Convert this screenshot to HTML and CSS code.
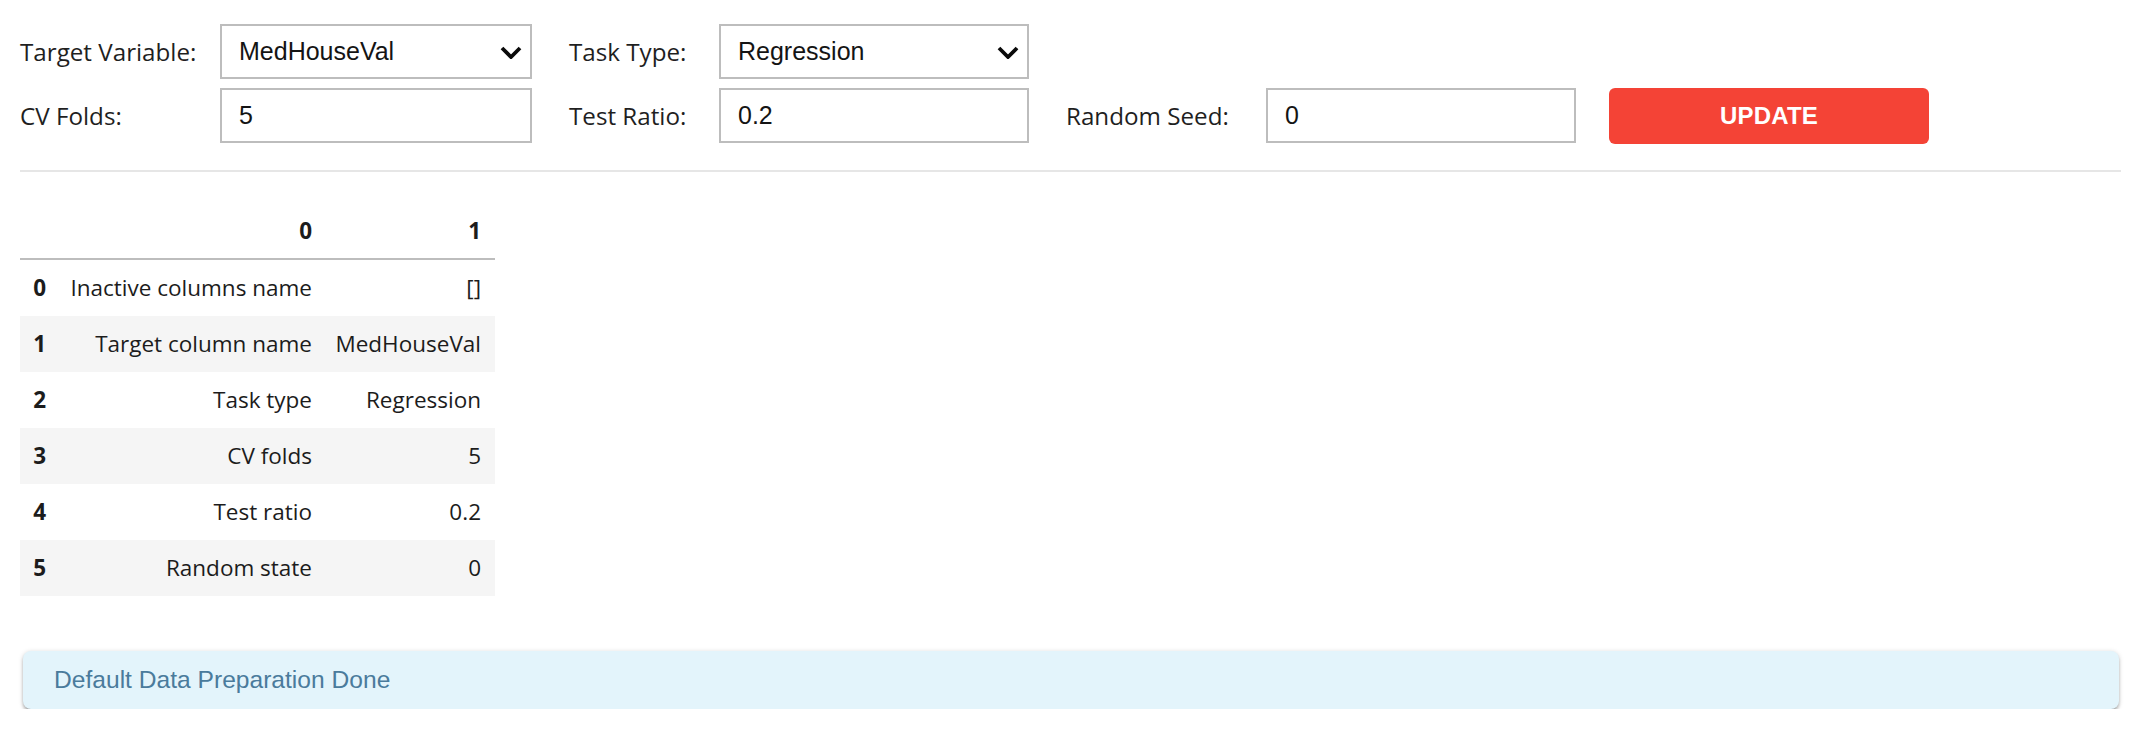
FILE: index.html
```html
<!DOCTYPE html>
<html lang="en">
<head>
<meta charset="utf-8">
<title>Data Preparation</title>
<link rel="stylesheet" href="styles.css">
</head>
<body>
<div class="page">
  <div class="controls">
    <div class="row">
      <div class="field">
        <label class="lbl lbl-wide">Target Variable:</label>
        <div class="select ctl-wide">
          <span class="select-value">MedHouseVal</span>
          <svg class="chev" width="22" height="13" viewBox="0 0 22 13"><polyline points="2,2 11,11 20,2" fill="none" stroke="#0a0a0a" stroke-width="3.8"/></svg>
        </div>
      </div>
      <div class="field">
        <label class="lbl lbl-narrow">Task Type:</label>
        <div class="select ctl">
          <span class="select-value">Regression</span>
          <svg class="chev" width="22" height="13" viewBox="0 0 22 13"><polyline points="2,2 11,11 20,2" fill="none" stroke="#0a0a0a" stroke-width="3.8"/></svg>
        </div>
      </div>
    </div>
    <div class="row">
      <div class="field">
        <label class="lbl lbl-wide">CV Folds:</label>
        <input class="text ctl-wide" type="text" value="5">
      </div>
      <div class="field">
        <label class="lbl lbl-narrow">Test Ratio:</label>
        <input class="text ctl" type="text" value="0.2">
      </div>
      <div class="field">
        <label class="lbl lbl-wide">Random Seed:</label>
        <input class="text ctl" type="text" value="0">
      </div>
      <button class="update" type="button">UPDATE</button>
    </div>
  </div>

  <div class="sep"></div>

  <table class="df">
    <thead>
      <tr><th class="c-idx"></th><th class="c-a">0</th><th class="c-b">1</th></tr>
    </thead>
    <tbody>
      <tr><th>0</th><td>Inactive columns name</td><td>[]</td></tr>
      <tr><th>1</th><td>Target column name</td><td>MedHouseVal</td></tr>
      <tr><th>2</th><td>Task type</td><td>Regression</td></tr>
      <tr><th>3</th><td>CV folds</td><td>5</td></tr>
      <tr><th>4</th><td>Test ratio</td><td>0.2</td></tr>
      <tr><th>5</th><td>Random state</td><td>0</td></tr>
    </tbody>
  </table>

  <div class="alert">Default Data Preparation Done</div>
</div>
</body>
</html>
```
FILE: styles.css
```css
html, body {
  margin: 0;
  padding: 0;
  background: #ffffff;
}

.page {
  padding: 24px 20px 0 20px;
  font-family: "Open Sans", "Noto Sans", sans-serif;
  color: #212121;
}

.controls {
  display: flex;
  flex-direction: column;
  gap: 9px;
}

.row {
  display: flex;
  align-items: center;
  column-gap: 37px;
  height: 55px;
}

.field {
  display: flex;
  align-items: center;
}

.lbl {
  font-size: 24.2px;
  color: #1f1f1f;
  white-space: nowrap;
}

.lbl-wide { width: 200px; }
.lbl-narrow { width: 150px; }

.ctl-wide { width: 312px; }
.ctl { width: 310px; }

.select, .text {
  box-sizing: border-box;
  height: 55px;
  border: 2px solid #bdbdbd;
  background: #fff;
  font-family: "Liberation Sans", Arial, sans-serif;
  font-size: 25px;
  color: #141414;
}

.select {
  display: flex;
  align-items: center;
  justify-content: space-between;
  padding: 0 8px 0 17px;
}

.chev {
  display: block;
  margin-top: 1px;
}

.text {
  padding: 0 17px;
  outline: none;
  margin: 0;
}

.update {
  box-sizing: border-box;
  width: 320px;
  height: 56px;
  margin-left: -4px;
  border: none;
  border-radius: 6px;
  background: #f44336;
  color: #ffffff;
  font-family: "Liberation Sans", Arial, sans-serif;
  font-weight: bold;
  font-size: 24px;
  letter-spacing: 0.2px;
  padding: 0;
}

.sep {
  margin-top: 27px;
  height: 2px;
  background: #e6e6e6;
}

.df {
  margin-top: 31px;
  border-collapse: collapse;
  table-layout: fixed;
  font-size: 22.5px;
  color: #1c1c1c;
}

.df th, .df td {
  text-align: right;
  line-height: 28px;
  padding: 14px 12px 14px 12px;
  white-space: nowrap;
}

.df thead th {
  font-weight: bold;
  padding-bottom: 13px;
  border-bottom: 2px solid #bdbdbd;
}

.df tbody th {
  font-weight: bold;
}

.df tbody tr:nth-child(even) {
  background: #f5f5f5;
}

.c-idx { width: 14px; }
.c-a { width: 242px; padding-right: 11px !important; }
.c-b { width: 146px; padding-right: 14px !important; }

.df td:last-child {
  padding-right: 14px;
}

.df td:nth-child(2) {
  padding-right: 11px;
}

.alert {
  margin: 55px 2px 0 3px;
  height: 58px;
  box-sizing: border-box;
  padding: 0 31px;
  display: flex;
  align-items: center;
  background: #e3f4fb;
  border-radius: 8px;
  box-shadow: 0 3px 3px 0 rgba(0,0,0,0.2), 0 3px 1px -2px rgba(0,0,0,0.14), 0 1px 5px 0 rgba(0,0,0,0.18);
  font-family: "Liberation Sans", Arial, sans-serif;
  font-size: 24.6px;
  color: #4a7b9c;
}
```
